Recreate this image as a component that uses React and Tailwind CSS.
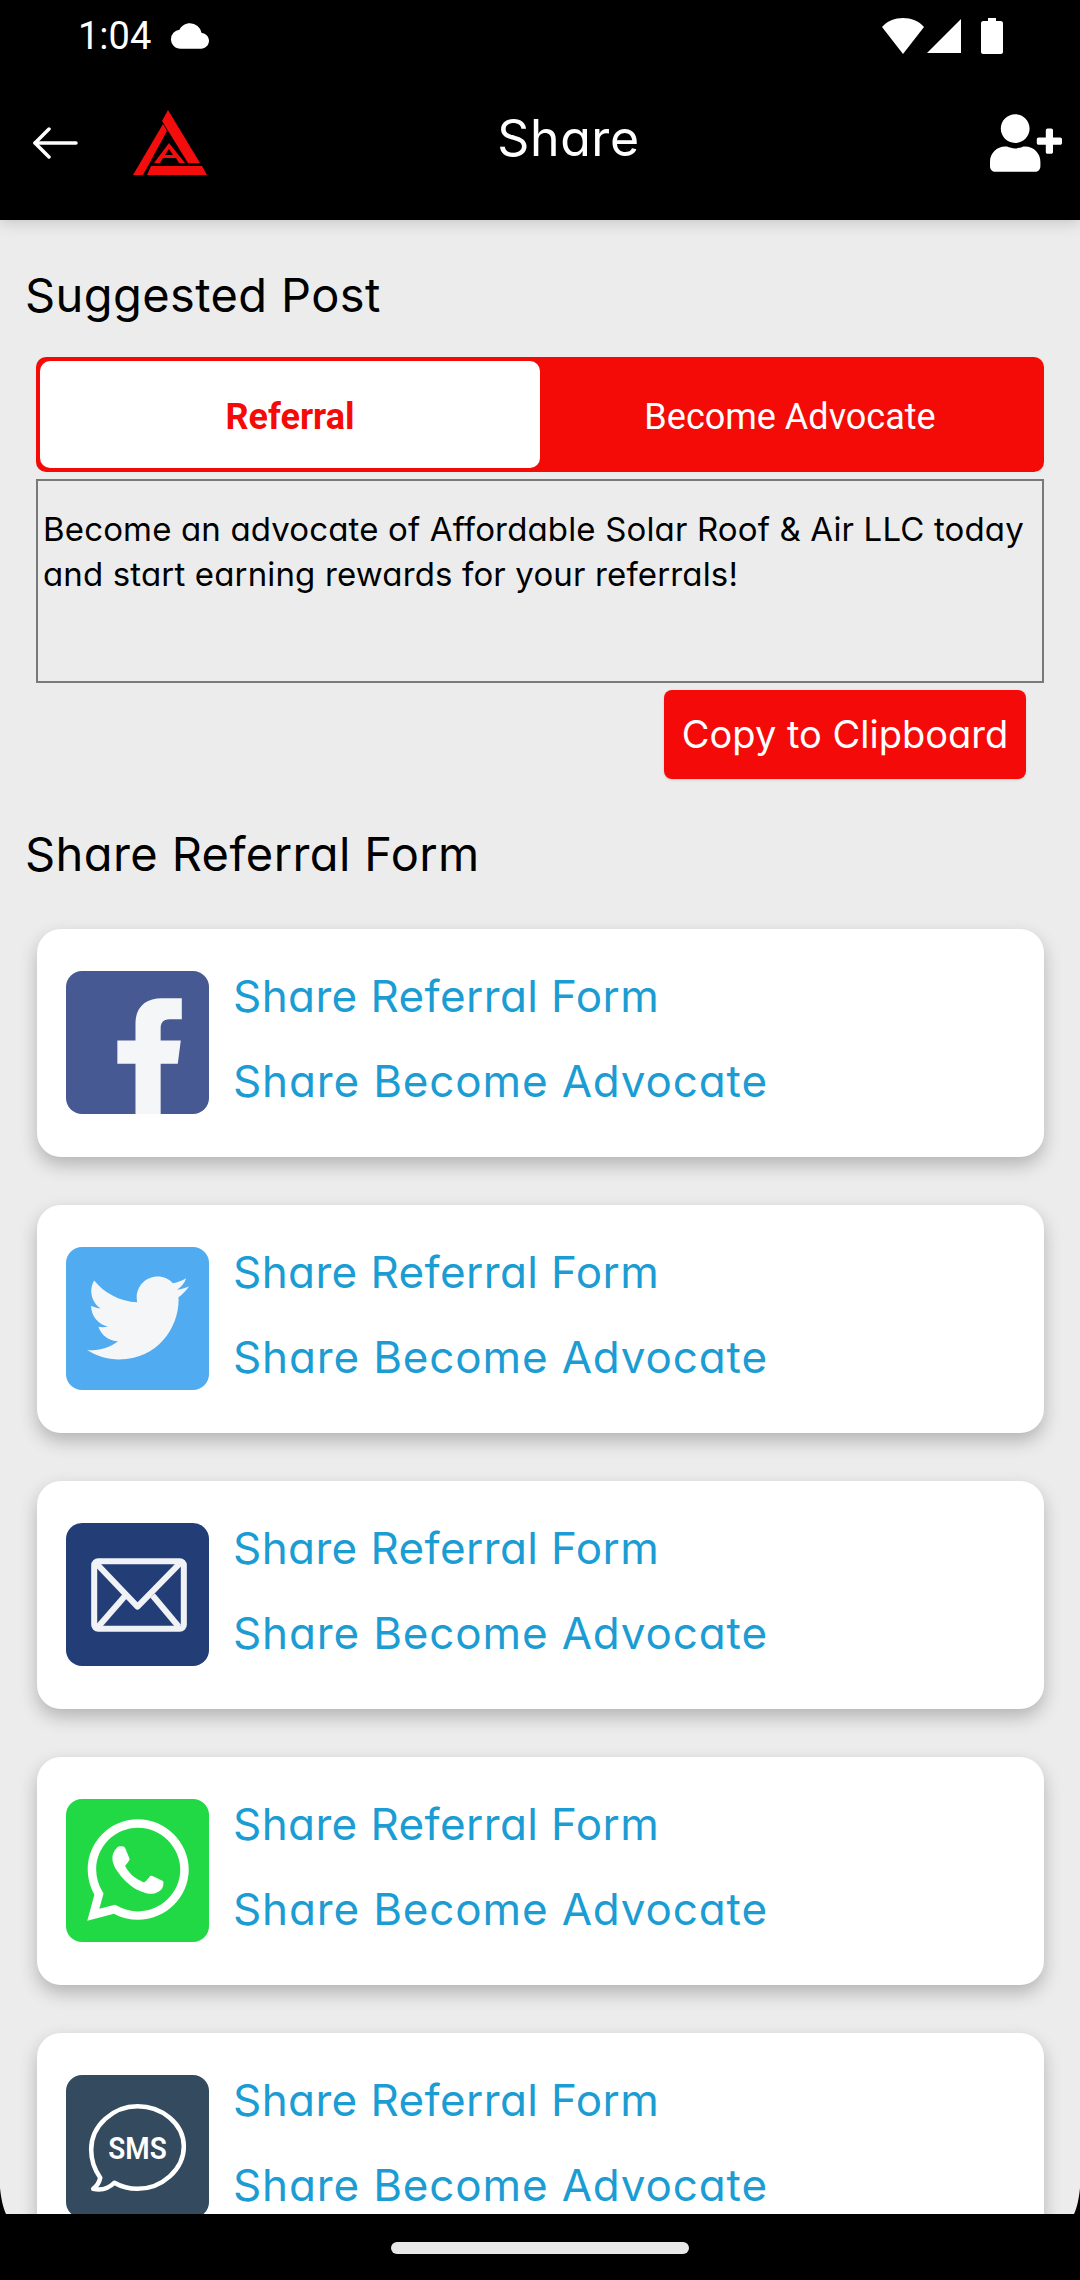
import React from 'react';
import { FaTwitter, FaWhatsapp, FaUserPlus } from 'react-icons/fa';
import { MdCloud } from 'react-icons/md';

const poppins = "[font-family:Inter,'Noto_Sans',sans-serif] [font-feature-settings:'cv11']";

const FacebookIcon = () => (
  <svg viewBox="0 0 142 142" className="w-full h-full">
    <path
      d="M69 142V92H51V69H69V52C69 35 80 27 95 27H115V48H103C96 48 94 52 94 57V69H114L111 92H94V142Z"
      fill="#f5f6f8"
    />
  </svg>
);

const MailIcon = () => (
  <svg viewBox="0 0 142 142" className="w-full h-full" fill="none" stroke="#f0f2f6" strokeWidth="6" strokeLinejoin="round">
    <rect x="28" y="38" width="89" height="67" rx="4" />
    <path d="M29 39L71 83L114 39" />
    <path d="M32 103L59 72" />
    <path d="M112 103L86 72" />
  </svg>
);

const SmsIcon = () => (
  <svg viewBox="0 0 142 142" className="w-full h-full">
    <path
      d="M71 31C47 31 25 50 25 74C25 87 29 95 34 102C33 107 31 110 27 113C36 115 43 112 48 107C55 111 63 113 71 113C95 113 117 94 117 71C117 48 95 31 71 31Z"
      fill="none"
      stroke="#fff"
      strokeWidth="4.5"
      strokeLinejoin="round"
    />
    <text
      x="71"
      y="83"
      textAnchor="middle"
      fill="#fff"
      fontSize="31"
      fontWeight="600"
      fontFamily="Roboto, sans-serif"
      textLength="58"
      lengthAdjust="spacingAndGlyphs"
    >
      SMS
    </text>
  </svg>
);

const Logo = () => (
  <svg viewBox="33 21 74 65" className="w-[74px] h-[65px]" fill="#f30d0d">
    <path d="M68 21L62 32L88 74H100Z" />
    <path d="M63 35L33 86H43L67 42Z" />
    <path d="M51 77H102L107 86H47Z" />
    <path d="M69 54L54 74H60L63 69H76L79 74H85ZM65 66L69 60L73 66Z" />
  </svg>
);

const channels = [
  { name: 'facebook', bg: 'bg-[#475993]', icon: <FacebookIcon /> },
  { name: 'twitter', bg: 'bg-[#50abf1]', icon: <FaTwitter size={102} color="#f5f6f8" /> },
  { name: 'mail', bg: 'bg-[#233e77]', icon: <MailIcon /> },
  { name: 'whatsapp', bg: 'bg-[#20d945]', icon: <FaWhatsapp size={116} color="#fff" /> },
  { name: 'sms', bg: 'bg-[#344a5e]', icon: <SmsIcon /> },
];

const ShareCard = ({ bg, icon }) => (
  <div className="shrink-0 h-[228px] ml-[37px] mr-[36px] mb-[48px] pl-[29px] pr-[30px] rounded-[24px] bg-white shadow-[0_8px_18px_rgba(0,0,0,0.24)] flex items-center">
    <div className={`w-[143px] h-[143px] mb-[2px] shrink-0 rounded-[16px] flex items-center justify-center overflow-hidden ${bg}`}>
      {icon}
    </div>
    <div className="ml-[24px] mb-[8px] flex flex-col gap-[34px] text-[44px] leading-[51px] text-[#1b9cd3]">
      <span className="tracking-[0.4px]">Share Referral Form</span>
      <span className="tracking-[0.85px]">Share Become Advocate</span>
    </div>
  </div>
);

const App = () => {
  return (
    <div className={`relative w-[1080px] h-[2280px] overflow-hidden flex flex-col bg-[#ececec] text-black ${poppins}`}>
      {/* Status bar */}
      <div className="h-[70px] shrink-0 bg-black text-white flex items-center pl-[78px] pr-[77px] pt-[2px]">
        <span className="font-['Roboto'] text-[38px] leading-none">1:04</span>
        <MdCloud size={38} className="ml-[20px]" />
        <div className="ml-auto flex items-center gap-[3px]">
          <svg viewBox="0 0 42 36" className="w-[42px] h-[36px]" fill="#fff">
            <path d="M0 9C5 3 13 0 21 0C29 0 37 3 42 9L21 36Z" />
          </svg>
          <svg viewBox="0 0 34 34" className="w-[34px] h-[34px]" fill="#fff">
            <path d="M34 0V34H0Z" />
          </svg>
          <svg viewBox="0 0 22 36" className="ml-[17px] w-[22px] h-[36px]" fill="#fff">
            <path d="M7 0H15V3H20C21 3 22 4 22 5V34C22 35 21 36 20 36H2C1 36 0 35 0 34V5C0 4 1 3 2 3H7Z" />
          </svg>
        </div>
      </div>

      {/* Header */}
      <div className="relative z-10 h-[150px] shrink-0 bg-black text-white flex items-center pb-[6px] shadow-[0_3px_14px_rgba(0,0,0,0.16)]">
        <svg viewBox="0 0 46 32" className="ml-[32px] w-[46px] h-[32px] mt-[1px]" fill="none" stroke="#fff" strokeWidth="3.5" strokeLinecap="round" strokeLinejoin="round">
          <path d="M44 16H3" />
          <path d="M17 2L3 16L17 30" />
        </svg>
        <div className="ml-[55px]">
          <Logo />
        </div>
        <div className="flex-1 text-center text-[50px] tracking-[0.6px] leading-none pr-[60px] -mt-[8px]">Share</div>
        <FaUserPlus size={72} className="mr-[18px] mt-[2px]" />
      </div>

      {/* Content */}
      <div className="flex-1 min-h-0 flex flex-col overflow-hidden">
        <h2 className="mt-[48px] ml-[25px] text-[47px] tracking-[0.4px] leading-[54px] font-normal">Suggested Post</h2>

        <div className="mt-[35px] mx-[36px] h-[115px] shrink-0 flex rounded-[10px] border-[4px] border-[#f40b07] bg-[#f40b07] font-['Roboto'] text-[36px]">
          <div className="w-[500px] pt-[5px] rounded-[10px] bg-white flex items-center justify-center font-bold text-[#f40b07]">
            Referral
          </div>
          <div className="flex-1 pt-[5px] flex items-center justify-center text-white">Become Advocate</div>
        </div>

        <div className="mt-[7px] mx-[36px] h-[204px] shrink-0 border-2 border-[#77797a] pt-[26px] pl-[5px] text-[33px] tracking-[0.15px] leading-[45px]">
          Become an advocate of Affordable Solar Roof &amp; Air LLC today and start earning rewards for your referrals!
        </div>

        <div className="mt-[7px] mr-[54px] flex justify-end">
          <button className="w-[362px] h-[89px] rounded-[8px] bg-[#f50a0a] text-white text-[38px] shadow-sm">
            Copy to Clipboard
          </button>
        </div>

        <h2 className="mt-[48px] ml-[25px] text-[47px] tracking-[0.4px] leading-[54px] font-normal">Share Referral Form</h2>

        <div className="mt-[48px] flex flex-col">
          {channels.map((c) => (
            <ShareCard key={c.name} bg={c.bg} icon={c.icon} />
          ))}
        </div>
      </div>

      {/* Nav bar */}
      <div className="relative z-10 h-[66px] shrink-0 bg-black flex items-center justify-center">
        <div className="w-[298px] h-[12px] rounded-full bg-[#e8e8e8] mt-[2px]" />
      </div>

      {/* Screen corners */}
      <svg viewBox="0 0 6 26" className="absolute left-0 bottom-[66px] w-[6px] h-[26px]" fill="#000">
        <path d="M0 0C1 10 3 20 6 26H0Z" />
      </svg>
      <svg viewBox="0 0 6 26" className="absolute right-0 bottom-[66px] w-[6px] h-[26px]" fill="#000">
        <path d="M6 0C5 10 3 20 0 26H6Z" />
      </svg>
    </div>
  );
};

export default App;
